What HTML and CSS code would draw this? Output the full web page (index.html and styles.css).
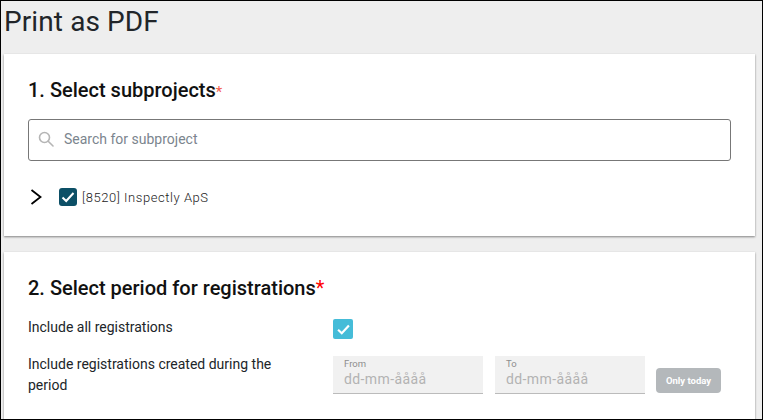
FILE: index.html
```html
<!DOCTYPE html>
<html lang="en">
<head>
<meta charset="utf-8">
<title>Print as PDF</title>
<link rel="stylesheet" href="styles.css">
</head>
<body>
<div class="frame">
  <h1 class="page-title">Print as PDF</h1>
  <section class="card card-first">
    <h2 class="card-title">1. Select subprojects<span class="req req-small">*</span></h2>
    <div class="search">
      <svg class="search-icon" width="16" height="16" viewBox="0 0 16 16" fill="none" stroke="#b5b5b5" stroke-width="1.6"><circle cx="6.5" cy="6.5" r="5"/><path d="M10.2 10.2 15 15" stroke-linecap="round"/></svg>
      <span class="search-text">Search for subproject</span>
    </div>
    <div class="tree-row">
      <svg class="chevron" width="12" height="16" viewBox="0 0 12 16" fill="none" stroke="#000" stroke-width="1.8"><path d="M1.5 1 10.5 8 1.5 15"/></svg>
      <span class="check check-dark"><svg width="14" height="12" viewBox="0 0 14 12" fill="none" stroke="#fff" stroke-width="2"><path d="M1.5 6.5 5.2 10 12.5 2"/></svg></span>
      <span class="tree-label">[8520] Inspectly ApS</span>
    </div>
  </section>
  <section class="card card-second">
    <h2 class="card-title">2. Select period for registrations<span class="req">*</span></h2>
    <div class="form-grid">
      <div class="form-label">Include all registrations</div>
      <div class="form-control">
        <span class="check check-light"><svg width="13" height="11" viewBox="0 0 12 10" fill="none" stroke="#fff" stroke-width="2"><path d="M1 5.2 4.4 8.4 11 1.4"/></svg></span>
      </div>
      <div class="form-label form-label-period">Include registrations created during the period</div>
      <div class="form-control dates">
        <div class="date"><span class="date-label">From</span><span class="date-value">dd-mm-åååå</span></div>
        <div class="date"><span class="date-label">To</span><span class="date-value">dd-mm-åååå</span></div>
        <span class="today">Only today</span>
      </div>
    </div>
  </section>
</div>
</body>
</html>
```
FILE: styles.css
```css
* { box-sizing: border-box; }
html, body { margin: 0; padding: 0; }
body { width: 763px; height: 420px; overflow: hidden; font-family: Roboto, sans-serif; }
.frame {
  width: 763px; height: 420px; overflow: hidden;
  background: #eeeeee;
  border: 1px solid #000;
  padding: 0 7px 0 3px;
}
.page-title {
  margin: 0; height: 52px; padding: 3px 0 0;
  font-size: 28px; line-height: 36px; font-weight: 400; letter-spacing: 0.1px; color: #212529;
}
.card { background: #fff; padding: 23px 24px 24px; box-shadow: 0 1px 2px rgba(0,0,0,.45); }
.card-first { height: 182px; margin-top: 1px; margin-bottom: 16px; }
.card-second { height: 190px; }
.card-title { margin: 0; font-size: 20px; line-height: 26px; font-weight: 500; color: #111; }
.req { color: #f00; font-weight: 400; }
.req-small { color: #f25c4d; font-size: 15px; }
.search {
  margin-top: 14px; height: 42px; display: flex; align-items: center; gap: 10px;
  padding: 0 0 2px 9px; border: 1px solid #777; border-radius: 3px;
}
.search-text { font-size: 14px; color: #7b858e; }
.tree-row { display: flex; align-items: center; margin-top: 26px; height: 20px; }
.chevron { margin-left: 2px; }
.check { display: flex; align-items: center; justify-content: center; border-radius: 3px; }
.check-dark { width: 18px; height: 18px; background: #0c4f66; margin-left: 17px; }
.tree-label { margin-left: 5px; font-size: 13px; font-weight: 300; letter-spacing: .55px; color: #222; }
.form-grid { display: grid; grid-template-columns: 305px 1fr; margin-top: 16px; row-gap: 11px; }
.form-label { font-size: 14px; line-height: 21px; color: #212529; padding-right: 20px; }
.form-label-period { padding-top: 4px; }
.form-control { min-height: 20px; }
.check-light { width: 20px; height: 20px; background: #45bcd8; margin-top: 2px; border-radius: 2px; }
.dates { display: flex; align-items: flex-end; gap: 12px; align-self: end; margin-bottom: 2px; }
.date {
  width: 150px; height: 38px; display: flex; flex-direction: column;
  padding: 2px 0 0 11px; background: #f1f1f1; border-bottom: 1px solid #bbb;
}
.date-label { font-size: 9.5px; line-height: 12px; color: #8d8d8d; }
.date-value { font-size: 14px; line-height: 18px; color: #b3b3b3; letter-spacing: .4px; }
.today {
  margin-left: -1px; margin-bottom: 1px; width: 65px; height: 25px; display: flex; align-items: center; justify-content: center;
  background: #b4b8bb; border-radius: 4px; color: #fff; font-size: 9.5px; font-weight: 700;
}
```
